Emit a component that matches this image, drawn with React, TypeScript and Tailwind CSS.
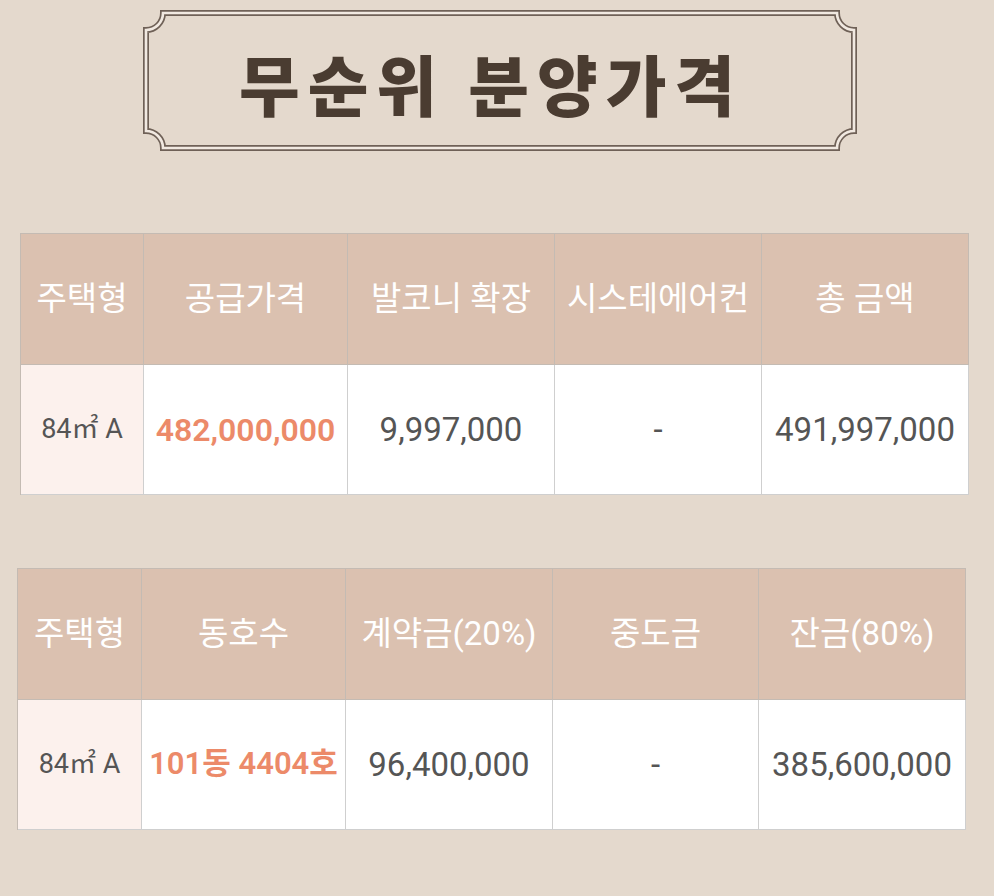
import React from "react";

const FONT = { fontFamily: 'Roboto, "Noto Sans CJK KR", sans-serif' };

function Frame() {
  const w = 714;
  const h = 141;
  const path = (i: number) => {
    const r = 20 - i;
    const x0 = i, y0 = i, x1 = w - i, y1 = h - i;
    return `M ${x0 + r} ${y0} L ${x1 - r} ${y0} A ${r} ${r} 0 0 0 ${x1} ${y0 + r} L ${x1} ${y1 - r} A ${r} ${r} 0 0 0 ${x1 - r} ${y1} L ${x0 + r} ${y1} A ${r} ${r} 0 0 0 ${x0} ${y1 - r} L ${x0} ${y0 + r} A ${r} ${r} 0 0 0 ${x0 + r} ${y0} Z`;
  };
  return (
    <svg className="absolute inset-0" width={w} height={h} viewBox={`0 0 ${w} ${h}`}>
      <path d={path(3)} fill="none" stroke="#6f6157" strokeWidth={6} />
      <path d={path(3)} fill="none" stroke="#f1e9e1" strokeWidth={2.6} />
    </svg>
  );
}

type Cell = { text: string; tone?: "gray" | "orange"; first?: boolean; size?: string };

function PriceTable({
  cols,
  headers,
  cells,
  className,
}: {
  cols: string;
  headers: string[];
  cells: Cell[];
  className: string;
}) {
  return (
    <div className={`w-[949px] border-l border-t border-[#c4bbb3] ${className}`} style={FONT}>
      <div className={`grid ${cols}`}>
        {headers.map((h, i) => (
          <div
            key={i}
            className="h-[131px] flex items-center justify-center bg-[#dbc1b0] border-r border-b border-[#c4bbb3] text-white text-[33px] whitespace-nowrap"
          >
            {h}
          </div>
        ))}
        {cells.map((c, i) => (
          <div
            key={i}
            className={`h-[130px] flex items-center justify-center border-r border-b border-[#cfcfcf] whitespace-nowrap ${
              c.first
                ? "bg-[#fcf1ed] text-[27px] text-[#555555]"
                : c.tone === "orange"
                ? `bg-white ${c.size ?? "text-[32px]"} text-[#ec8a69] font-semibold`
                : "bg-white text-[33px] text-[#555555]"
            }`}
          >
            {c.text}
          </div>
        ))}
      </div>
    </div>
  );
}

export default function App() {
  return (
    <div className="w-[994px] h-[896px] bg-[#e4d9cd] overflow-hidden">
      <div className="pt-[10px] pl-[143px]">
        <div className="relative w-[714px] h-[141px] flex items-center justify-center">
          <Frame />
          <div
            className="relative text-[66px] font-black text-[#4a3c31] leading-none tracking-[8px] pr-[18px] pt-[3px]"
            style={{ fontFamily: '"Noto Sans CJK KR", sans-serif' }}
          >
            무순위 분양가격
          </div>
        </div>
      </div>

      <PriceTable
        className="mt-[82px] ml-[20px]"
        cols="grid-cols-[123px_204px_207px_207px_207px]"
        headers={["주택형", "공급가격", "발코니 확장", "시스테에어컨", "총 금액"]}
        cells={[
          { text: "84㎡ A", first: true },
          { text: "482,000,000", tone: "orange" },
          { text: "9,997,000" },
          { text: "-" },
          { text: "491,997,000" },
        ]}
      />

      <PriceTable
        className="mt-[73px] ml-[17px]"
        cols="grid-cols-[124px_204px_207px_206px_207px]"
        headers={["주택형", "동호수", "계약금(20%)", "중도금", "잔금(80%)"]}
        cells={[
          { text: "84㎡ A", first: true },
          { text: "101동 4404호", tone: "orange", size: "text-[31px]" },
          { text: "96,400,000" },
          { text: "-" },
          { text: "385,600,000" },
        ]}
      />
    </div>
  );
}
